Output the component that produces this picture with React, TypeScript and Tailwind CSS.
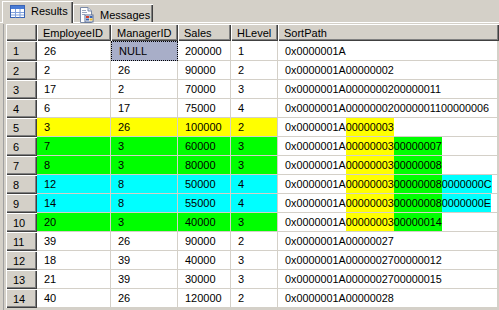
import React from 'react'

type Row = {
  emp: string
  mgr: string
  sales: string
  lvl: string
  path: string[]
  bg: string
  hl: boolean
}

const ROWS: Row[] = [
  { emp: '26', mgr: 'NULL', sales: '200000', lvl: '1', path: ['0x0000001A'], bg: '', hl: false },
  { emp: '2', mgr: '26', sales: '90000', lvl: '2', path: ['0x0000001A', '00000002'], bg: '', hl: false },
  { emp: '17', mgr: '2', sales: '70000', lvl: '3', path: ['0x0000001A', '00000002', '00000011'], bg: '', hl: false },
  { emp: '6', mgr: '17', sales: '75000', lvl: '4', path: ['0x0000001A', '00000002', '00000011', '00000006'], bg: '', hl: false },
  { emp: '3', mgr: '26', sales: '100000', lvl: '2', path: ['0x0000001A', '00000003'], bg: 'bg-[#ffff00]', hl: true },
  { emp: '7', mgr: '3', sales: '60000', lvl: '3', path: ['0x0000001A', '00000003', '00000007'], bg: 'bg-[#00ff00]', hl: true },
  { emp: '8', mgr: '3', sales: '80000', lvl: '3', path: ['0x0000001A', '00000003', '00000008'], bg: 'bg-[#00ff00]', hl: true },
  { emp: '12', mgr: '8', sales: '50000', lvl: '4', path: ['0x0000001A', '00000003', '00000008', '0000000C'], bg: 'bg-[#00ffff]', hl: true },
  { emp: '14', mgr: '8', sales: '55000', lvl: '4', path: ['0x0000001A', '00000003', '00000008', '0000000E'], bg: 'bg-[#00ffff]', hl: true },
  { emp: '20', mgr: '3', sales: '40000', lvl: '3', path: ['0x0000001A', '00000003', '00000014'], bg: 'bg-[#00ff00]', hl: true },
  { emp: '39', mgr: '26', sales: '90000', lvl: '2', path: ['0x0000001A', '00000027'], bg: '', hl: false },
  { emp: '18', mgr: '39', sales: '40000', lvl: '3', path: ['0x0000001A', '00000027', '00000012'], bg: '', hl: false },
  { emp: '21', mgr: '39', sales: '30000', lvl: '3', path: ['0x0000001A', '00000027', '00000015'], bg: '', hl: false },
  { emp: '40', mgr: '26', sales: '120000', lvl: '2', path: ['0x0000001A', '00000028'], bg: '', hl: false },
]

const SEG_BG = ['', 'bg-[#ffff00]', 'bg-[#00ff00]', 'bg-[#00ffff]']

const BTN = 'bg-[#d4d0c8] shadow-[inset_1px_1px_#ffffff,inset_-1px_-1px_#404040,inset_-2px_-2px_#808080]'

const COLS = [
  { label: 'EmployeeID', w: 'w-[74px]' },
  { label: 'ManagerID', w: 'w-[67px]' },
  { label: 'Sales', w: 'w-[53px]' },
  { label: 'HLevel', w: 'w-[47px]' },
]

function TableIcon() {
  return (
    <svg width="15" height="13" viewBox="0 0 15 13" className="shrink-0">
      <rect x="0.5" y="0.5" width="14" height="12" fill="#ffffff" stroke="#3a64b4" />
      <rect x="1" y="1" width="13" height="3" fill="#4a7cd6" />
      <path d="M1 7.5H14M1 10H14M5.5 4V12.5M10 4V12.5" stroke="#7fa0dc" strokeWidth="1" />
    </svg>
  )
}

function MessageIcon() {
  return (
    <svg width="15" height="16" viewBox="0 0 15 16" className="shrink-0">
      <path d="M1.5 0.5H9L12.5 4V15.5H1.5Z" fill="#ffffff" stroke="#7a8aa8" />
      <path d="M9 0.5V4H12.5" fill="#dfe6f2" stroke="#7a8aa8" />
      <path d="M3 3.5H7M3 5.5H8M3 7.5H6" stroke="#9aa6bc" />
      <rect x="6" y="8" width="8" height="7" fill="#ffffff" stroke="#5b6f96" />
      <rect x="7" y="9" width="3" height="2" fill="#d8402c" />
      <rect x="10.5" y="9" width="3" height="2" fill="#3a64b4" />
      <rect x="7" y="11.5" width="3" height="2" fill="#3a64b4" />
      <rect x="10.5" y="11.5" width="3" height="2" fill="#e8b62c" />
    </svg>
  )
}

export default function App() {
  return (
    <div className="w-[499px] h-[310px] overflow-hidden bg-[#d4d0c8] text-[11px] leading-none text-black font-['Liberation_Sans',Arial,sans-serif] flex flex-col">
      {/* Tabs */}
      <div className="h-[23px] shrink-0 flex items-end pl-[2px] border-b border-white">
        <div className="relative z-10 -mb-px h-[22px] w-[71px] flex items-center gap-[6px] pl-[7px] pb-[2px] bg-[#d4d0c8] border-t border-l border-white shadow-[inset_-1px_0_#404040,inset_-2px_0_#808080]">
          <TableIcon />
          <span>Results</span>
        </div>
        <div className="h-[18px] w-[80px] flex items-center gap-[6px] pl-[5px] pt-[3px] bg-[#d4d0c8] border-t border-l border-white shadow-[inset_-1px_0_#404040,inset_-2px_0_#808080]">
          <MessageIcon />
          <span>Messages</span>
        </div>
      </div>

      {/* Grid */}
      <div className="flex-1 flex pl-[3px] pt-[1px]">
        <div className="flex-1 border-l border-[#a0a0a0] pl-[2px] flex flex-col">
          {/* Header */}
          <div className="flex h-[17px] shrink-0">
            <div className={`w-[31px] ${BTN}`} />
            {COLS.map(c => (
              <div key={c.label} className={`${c.w} ${BTN} flex items-center pl-[6px] pt-[1px]`}>
                {c.label}
              </div>
            ))}
            <div className={`flex-1 ${BTN} flex items-center pl-[6px] pt-[1px]`}>SortPath</div>
          </div>

          {/* Rows */}
          {ROWS.map((r, i) => (
            <div key={i} className={`flex shrink-0 ${i === 0 ? 'h-[20px]' : 'h-[19px]'}`}>
              <div className={`w-[31px] ${BTN} flex items-center pl-[7px] pt-[1px]`}>{i + 1}</div>
              <div className={`w-[74px] ${r.bg || 'bg-white'} border-r border-b border-[#d4d0c8] flex items-center pl-[7px] pt-[1px]`}>{r.emp}</div>
              {r.mgr === 'NULL' ? (
                <div className="w-[67px] bg-[#a8aec8] border border-dotted border-black flex items-center pl-[7px]">NULL</div>
              ) : (
                <div className={`w-[67px] ${r.bg || 'bg-white'} border-r border-b border-[#d4d0c8] flex items-center pl-[7px] pt-[1px]`}>{r.mgr}</div>
              )}
              <div className={`w-[53px] ${r.bg || 'bg-white'} border-r border-b border-[#d4d0c8] flex items-center pl-[7px] pt-[1px]`}>{r.sales}</div>
              <div className={`w-[47px] ${r.bg || 'bg-white'} border-r border-b border-[#d4d0c8] flex items-center pl-[7px] pt-[1px]`}>{r.lvl}</div>
              <div className="flex-1 bg-white border-r-2 border-b border-[#d4d0c8] flex pl-[7px] text-[10.8px]">
                {r.path.map((s, j) => (
                  <span key={j} className={`flex items-center pt-[1px] ${r.hl ? SEG_BG[j] : ''}`}>{s}</span>
                ))}
              </div>
            </div>
          ))}
        </div>
      </div>
    </div>
  )
}
